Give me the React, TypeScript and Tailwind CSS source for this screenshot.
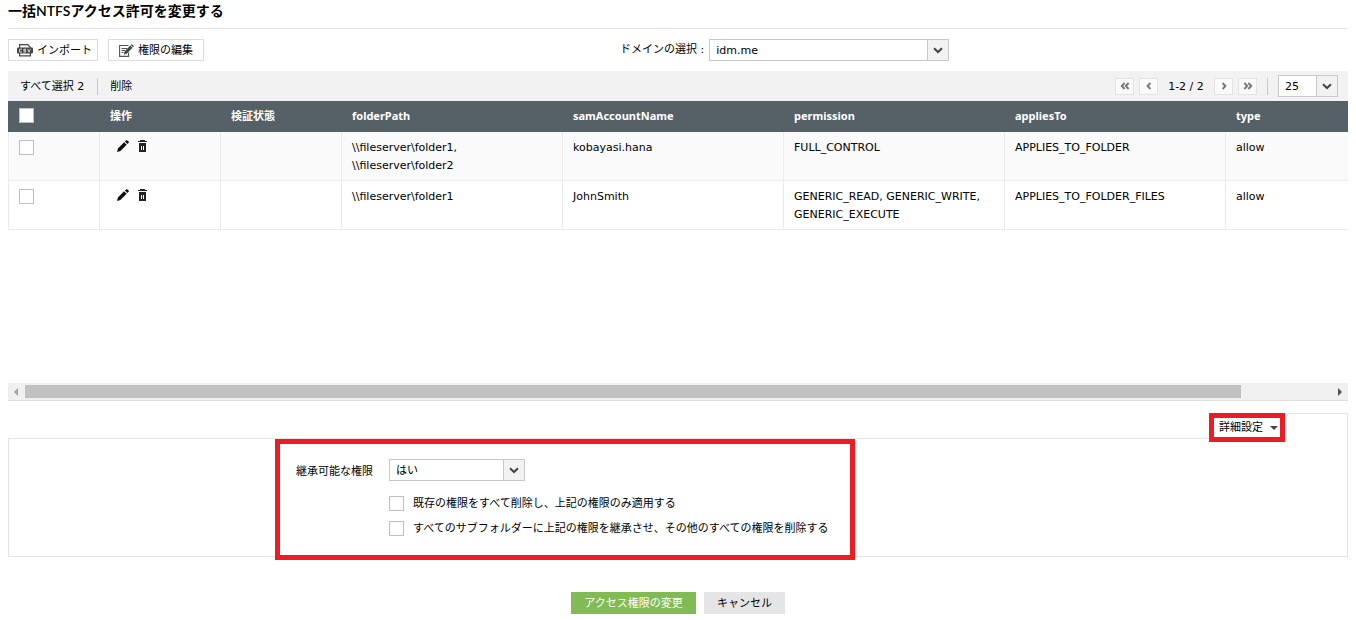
import { useState } from "react";
import type { ReactNode } from "react";
import clsx from "clsx";

type Row = {
  id: number;
  folderPath: string[];
  samAccountName: string;
  permission: string;
  appliesTo: string;
  type: string;
};

const rows: Row[] = [
  {
    id: 1,
    folderPath: ["\\\\fileserver\\folder1,", "\\\\fileserver\\folder2"],
    samAccountName: "kobayasi.hana",
    permission: "FULL_CONTROL",
    appliesTo: "APPLIES_TO_FOLDER",
    type: "allow",
  },
  {
    id: 2,
    folderPath: ["\\\\fileserver\\folder1"],
    samAccountName: "JohnSmith",
    permission: "GENERIC_READ, GENERIC_WRITE, GENERIC_EXECUTE",
    appliesTo: "APPLIES_TO_FOLDER_FILES",
    type: "allow",
  },
];

const columns = ["操作", "検証状態", "folderPath", "samAccountName", "permission", "appliesTo", "type"];

function CsvIcon() {
  return (
    <svg width="16" height="13" viewBox="0 0 16 13" className="shrink-0" aria-hidden="true">
      <path d="M2.6 4V.6h8l2.8 2.6V4M2.6 9v2.9h10.8V9" fill="none" stroke="#444" strokeWidth="1.2" />
      <rect x="0" y="3.6" width="16" height="6" rx="1" fill="#444" />
      <path
        d="M5 5.2H2.6v2.9H5M9 5.2H6.8v1.4h1.8v1.5H6.4M10.6 4.9l1.4 3.3 1.4-3.3"
        fill="none"
        stroke="#fff"
        strokeWidth="0.8"
      />
    </svg>
  );
}

function EditNoteIcon() {
  return (
    <svg width="15" height="13" viewBox="0 0 15 13" className="shrink-0" aria-hidden="true">
      <path d="M9.5 1.5H.6v10.9h9V8.5" fill="none" stroke="#555" strokeWidth="1.1" />
      <path d="M2.5 4.5h5.5M2.5 6.5h3.5M2.5 8.5h2" stroke="#555" strokeWidth="1" />
      <path d="M4.8 10.8l.8-3.4L11.2 1.6l2.3 2.2L8 9.6zM11.8 1l1-1 2.2 2.2-.9 1z" fill="#444" />
    </svg>
  );
}

function PencilIcon() {
  return (
    <svg width="12" height="12" viewBox="0 0 12 12" aria-hidden="true">
      <path d="M0 12l.9-3.4L7.1 2.3l2.6 2.5L3.4 11zM7.9 1.6L9.2.4q.6-.6 1.2 0l1.2 1.2q.6.6 0 1.2l-1.2 1.3z" fill="#111" />
    </svg>
  );
}

function TrashIcon() {
  return (
    <svg width="9" height="12" viewBox="0 0 9 12" shapeRendering="crispEdges" aria-hidden="true">
      <path d="M2 0h5v1h2v1H0V1h2z" fill="#222" />
      <path d="M1 3h7v9H1z" fill="#222" />
      <path d="M3 6h1v4H3zM5 6h1v4H5z" fill="#fff" />
    </svg>
  );
}

function Chevrons({ double, right }: { double?: boolean; right?: boolean }) {
  return (
    <svg
      width="10"
      height="8"
      viewBox="0 0 10 8"
      className={clsx(right && "rotate-180")}
      fill="none"
      stroke="#777"
      strokeWidth="1.9"
      aria-hidden="true"
    >
      {double ? <path d="M4.6 1L1.8 4l2.8 3M8.6 1L5.8 4l2.8 3" /> : <path d="M6.4 1L3.6 4l2.8 3" />}
    </svg>
  );
}

function PagerButton({ label, double, right }: { label: string; double?: boolean; right?: boolean }) {
  return (
    <button
      type="button"
      aria-label={label}
      className="flex h-[17px] w-[19px] items-center justify-center border border-[#e3e3e3] bg-[#fafafa]"
    >
      <Chevrons double={double} right={right} />
    </button>
  );
}

function Dropdown({
  id,
  label,
  options,
  className,
}: {
  id: string;
  label?: string;
  options: string[];
  className: string;
}) {
  return (
    <div className={clsx("relative h-[22px]", className)}>
      <select
        id={id}
        aria-label={label}
        className="block h-full w-full appearance-none border border-[#c8c8c8] bg-white pt-0.5 pr-6 pl-1.5 outline-none"
      >
        {options.map((option) => (
          <option key={option}>{option}</option>
        ))}
      </select>
      <span className="pointer-events-none absolute inset-y-0 right-0 flex w-[22px] items-center justify-center border border-[#c8c8c8] bg-[#f2f2f2]">
        <svg width="10" height="7" viewBox="0 0 10 7" fill="none" stroke="#444" strokeWidth="2" aria-hidden="true">
          <path d="M1 1.2l4 3.8 4-3.8" />
        </svg>
      </span>
    </div>
  );
}

function Checkbox({
  id,
  label,
  checked,
  onChange,
}: {
  id?: string;
  label?: string;
  checked?: boolean;
  onChange?: () => void;
}) {
  return (
    <input
      type="checkbox"
      id={id}
      aria-label={label}
      checked={checked}
      onChange={onChange}
      className="block size-[15px] shrink-0 appearance-none border border-[#bfbfbf] bg-white checked:bg-[#566167]"
    />
  );
}

function ToolbarButton({ icon, className, children }: { icon: ReactNode; className: string; children: ReactNode }) {
  return (
    <button
      type="button"
      className={clsx("flex h-[22px] items-center border border-[#dcdcdc] bg-white whitespace-nowrap", className)}
    >
      {icon}
      <span className="pt-0.5">{children}</span>
    </button>
  );
}

export default function App() {
  const [selected, setSelected] = useState<number[]>([]);
  const allSelected = selected.length === rows.length;

  const toggleRow = (id: number) =>
    setSelected((s) => (s.includes(id) ? s.filter((x) => x !== id) : [...s, id]));

  return (
    <div className="bg-white px-2 font-['DejaVu_Sans','Noto_Sans_CJK_JP',sans-serif] text-[11px] leading-[18px] text-black">
      <h1 className="h-[29px] border-b border-[#e3e3e3] pt-0.5 font-['Lato','Noto_Sans_CJK_JP',sans-serif] text-[14px] leading-[18px] font-semibold">
        一括NTFSアクセス許可を変更する
      </h1>

      <div className="flex items-center py-2.5">
        <div className="flex gap-2.5">
          <ToolbarButton icon={<CsvIcon />} className="w-[90px] gap-1 pl-2">
            インポート
          </ToolbarButton>
          <ToolbarButton icon={<EditNoteIcon />} className="w-24 gap-1 pl-2.5">
            権限の編集
          </ToolbarButton>
        </div>
        <div className="ml-[416px] flex items-center gap-[5px]">
          <label htmlFor="domain" className="whitespace-nowrap">
            ドメインの選択 :
          </label>
          <Dropdown id="domain" options={["idm.me"]} className="w-60" />
        </div>
      </div>

      <div className="flex h-[30px] items-center justify-between bg-[#f2f2f2] pr-2.5 pl-3">
        <div className="flex items-center">
          <button type="button" className="pt-0.5" onClick={() => setSelected(rows.map((r) => r.id))}>
            すべて選択 2
          </button>
          <span className="mr-3 ml-[13px] h-[17px] w-px bg-[#c8c8c8]" />
          <button type="button" className="pt-0.5">
            削除
          </button>
        </div>
        <div className="flex items-center">
          <div className="flex gap-[5px]">
            <PagerButton label="最初のページ" double />
            <PagerButton label="前のページ" />
          </div>
          <span className="w-14 pt-0.5 text-center">1-2 / 2</span>
          <div className="flex gap-[5px]">
            <PagerButton label="次のページ" right />
            <PagerButton label="最後のページ" double right />
          </div>
          <span className="mx-2.5 h-[17px] w-px bg-[#c8c8c8]" />
          <Dropdown id="page-size" label="表示件数" options={["25", "50", "100"]} className="w-[60px]" />
        </div>
      </div>

      <div className="h-[282px] overflow-hidden">
        <table className="w-[1439px] table-fixed border-separate border-spacing-0">
          <colgroup>
            <col className="w-[92px]" />
            <col className="w-[121px]" />
            <col className="w-[121px]" />
            <col className="w-[221px]" />
            <col className="w-[221px]" />
            <col className="w-[221px]" />
            <col className="w-[221px]" />
            <col className="w-[221px]" />
          </colgroup>
          <thead>
            <tr className="h-[31px] bg-[#566167] text-left font-['Noto_Sans','Noto_Sans_CJK_JP',sans-serif] text-white">
              <th className="pb-0.5 pl-[11px]">
                <Checkbox
                  label="すべて選択"
                  checked={allSelected}
                  onChange={() => setSelected(allSelected ? [] : rows.map((r) => r.id))}
                />
              </th>
              {columns.map((name) => (
                <th key={name} className="pb-0.5 pl-2.5 font-bold">
                  {name}
                </th>
              ))}
            </tr>
          </thead>
          <tbody>
            {rows.map((row) => (
              <tr
                key={row.id}
                className="align-top odd:bg-[#fafafa] [&>td]:border-r [&>td]:border-b [&>td]:border-[#ebebeb] [&>td]:px-2.5 [&>td]:pt-[7px] [&>td]:pb-[5px]"
              >
                <td className="border-l">
                  <div className="pt-px">
                    <Checkbox
                      label={row.samAccountName}
                      checked={selected.includes(row.id)}
                      onChange={() => toggleRow(row.id)}
                    />
                  </div>
                </td>
                <td>
                  <div className="flex gap-[9px] pt-px pl-[7px]">
                    <button type="button" aria-label="編集">
                      <PencilIcon />
                    </button>
                    <button type="button" aria-label="削除">
                      <TrashIcon />
                    </button>
                  </div>
                </td>
                <td></td>
                <td>
                  {row.folderPath.map((path) => (
                    <div key={path}>{path}</div>
                  ))}
                </td>
                <td>{row.samAccountName}</td>
                <td>{row.permission}</td>
                <td>{row.appliesTo}</td>
                <td>{row.type}</td>
              </tr>
            ))}
          </tbody>
        </table>
      </div>

      <div className="flex h-[18px] items-center justify-between border-b border-[#e0e0e0] bg-[#f0f0f0] px-1.5">
        <svg width="4" height="8" viewBox="0 0 4 8" aria-hidden="true">
          <path d="M4 0v8L0 4z" fill="#a3a3a3" />
        </svg>
        <div className="mr-[97px] ml-[7px] h-[13px] flex-1 bg-[#c1c1c1]" />
        <svg width="4" height="8" viewBox="0 0 4 8" aria-hidden="true">
          <path d="M0 0v8l4-4z" fill="#505050" />
        </svg>
      </div>

      <div className="mt-3 flex">
        <div className="flex-1 border-b border-[#e3e3e3]" />
        <div className="h-[26px] w-[139px] border-t border-r border-[#e3e3e3]">
          <button
            type="button"
            className="-mt-px flex h-[29px] w-[76px] items-center gap-[7px] border-5 border-[#ed1c24] bg-white pl-[5px] whitespace-nowrap"
          >
            詳細設定
            <svg width="8" height="4" viewBox="0 0 8 4" className="shrink-0" aria-hidden="true">
              <path d="M0 0h8L4 4z" fill="#444" />
            </svg>
          </button>
        </div>
      </div>

      <div className="border-x border-b border-[#e3e3e3]">
        <div className="-mb-1 ml-[266px] flex h-[121px] w-[580px] flex-col border-5 border-[#ed1c24] bg-white pt-[15px] pl-4">
          <div className="flex items-center">
            <label htmlFor="inheritable" className="w-[93px] pt-1">
              継承可能な権限
            </label>
            <Dropdown id="inheritable" options={["はい", "いいえ"]} className="w-[136px]" />
          </div>
          <div className="mt-3 flex flex-col gap-[5px] pl-[93px]">
            <div className="flex items-center gap-[9px]">
              <Checkbox id="replace-existing" />
              <label htmlFor="replace-existing" className="pt-0.5">
                既存の権限をすべて削除し、上記の権限のみ適用する
              </label>
            </div>
            <div className="flex items-center gap-[9px]">
              <Checkbox id="replace-children" />
              <label htmlFor="replace-children" className="pt-0.5">
                すべてのサブフォルダーに上記の権限を継承させ、その他のすべての権限を削除する
              </label>
            </div>
          </div>
        </div>
      </div>

      <div className="flex justify-center gap-2 pt-[35px]">
        <button type="button" className="h-[22px] w-[125px] bg-[#82bb53] pt-0.5 text-white">
          アクセス権限の変更
        </button>
        <button type="button" className="h-[22px] w-[81px] bg-[#e5e5e5] pt-0.5">
          キャンセル
        </button>
      </div>
    </div>
  );
}
